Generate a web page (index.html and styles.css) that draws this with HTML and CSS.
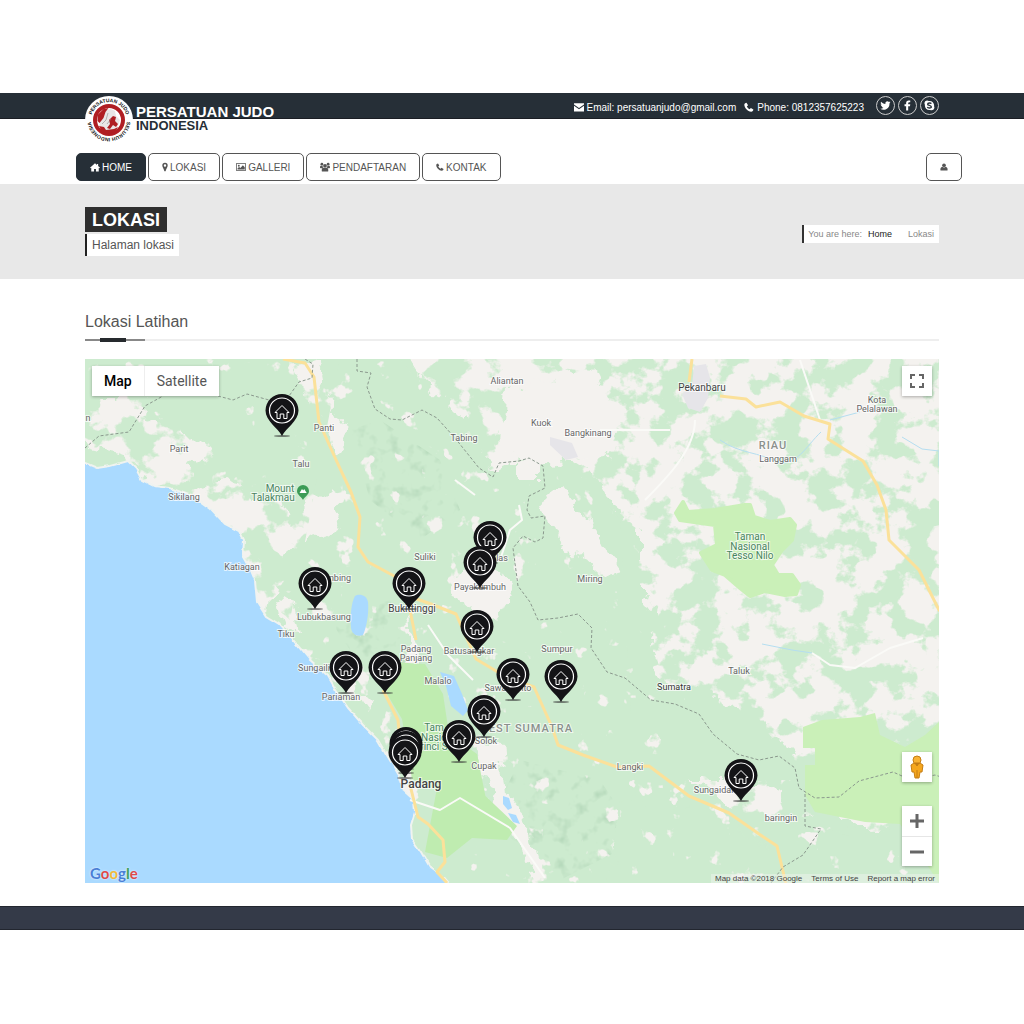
FILE: index.html
```html
<!DOCTYPE html>
<html lang="id">
<head>
  <meta charset="UTF-8">
  <meta name="viewport" content="width=device-width, initial-scale=1">
  <title>Persatuan Judo Indonesia</title>
  <link rel="stylesheet" href="styles.css">
</head>
<body>
  <header>
    <div class="topbar">
      <div class="container topbar-inner">
        <a class="brand" href="index.html">
          <svg class="logo" viewBox="0 0 48 48" aria-hidden="true">
            <defs>
              <path id="arcTop" d="M24 42A18 18 0 1 1 24.100 42"/>
              <path id="arcBottom" d="M24 6A18 18 0 1 1 23.900 6"/>
            </defs>
            <circle cx="24" cy="24" r="24" fill="#fff"/>
            <text class="logo-text"><textPath href="#arcTop" startOffset="50%">PERSATUAN JUDO</textPath></text>
            <text class="logo-text"><textPath href="#arcBottom" startOffset="50%">SELURUH INDONESIA</textPath></text>
            <circle cx="24" cy="24" r="14" fill="#fff" stroke="#b01e23" stroke-width="4"/>
            <path d="M14 31l2-9c1-6 5-9 10-9l4 2 1 5 4 4-2 6-5 4-8 1z" fill="#e9e6e6"/>
            <path d="M12.500 19l6-6 5-1-3 4-2 6-4 5-2-2z" fill="#b01e23"/>
            <path d="M28 20l3 1-1 4 3 3-2 3-3-2-3 4-3-1 3-4-1-4z" fill="#b01e23"/>
            <path d="M14 30l5 1 2 3 8-1 4-2-3 5-7 2-6-2z" fill="#b01e23"/>
            <path d="M17 28l4-4 2-7M22 28l4-5" fill="none" stroke="#8c8c8c" stroke-width="0.600"/>
          </svg>
          <span class="brand-name">PERSATUAN JUDO <small>INDONESIA</small></span>
        </a>
        <div class="contact">
          <span>
            <svg class="icon" viewBox="0 0 16 16"><path d="M0 2h16v2L8 9.500 0 4zM0 6l8 5.500L16 6v9H0z"/></svg>
            Email: persatuanjudo@gmail.com
          </span>
          <span>
            <svg class="icon" viewBox="0 0 16 16"><path d="M4 1l2.500 4-2 2c1 2 2.500 3.500 4.500 4.500l2-2 4 2.500c0 2-1.500 3.500-3.500 3.500C6 15.500.5 9 .5 4.500.5 2.500 2 1 4 1z"/></svg>
            Phone: 0812357625223
          </span>
        </div>
        <div class="social">
          <a href="#" aria-label="Twitter"><svg viewBox="0 0 24 24"><path d="M23 5c-.8.400-1.700.600-2.600.7.900-.6 1.600-1.400 2-2.500-.9.500-1.900.9-2.900 1.100a4.600 4.600 0 0 0-7.800 4.200C7.900 8.300 4.500 6.500 2.200 3.700a4.600 4.600 0 0 0 1.400 6.100c-.7 0-1.400-.2-2-.6 0 2.300 1.500 4.200 3.600 4.600-.7.200-1.400.2-2 .1.600 1.800 2.200 3.100 4.200 3.200A9.200 9.200 0 0 1 .6 19 13 13 0 0 0 20.700 7.400C21.600 6.700 22.400 5.900 23 5z"/></svg></a>
          <a href="#" aria-label="Facebook"><svg viewBox="0 0 24 24"><path d="M18 1v4h-2.500c-1.300 0-2 .7-2 2v2.500H18l-.6 4h-3.900V23H9V13.500H5.500v-4H9v-3C9 3 11 1 14.500 1z"/></svg></a>
          <a href="#" aria-label="Skype"><svg viewBox="0 0 24 24"><path d="M7 1c1.500 0 2.500.4 3.500 1.100C17 1 23 6 22 13.500c2.500 5-2 10.500-8.500 8.400C6.500 23 1 17.500 2 10.500-.5 6 2 1 7 1z"/><path class="skype-s" d="M16 8c-1-2-8-2.500-8 1 0 3.500 8 2 8 6 0 3.500-8 3-8.500 0"/></svg></a>
        </div>
      </div>
    </div>

    <div class="container">
      <nav class="menu">
        <a class="btn active" href="index.html">
          <svg class="icon" viewBox="0 0 16 16"><path d="M8 2l3 2.600V3h2v3.300L16 9l-1 1-1-.9V15H9.500v-4h-3v4H2V9.100L1 10 0 9z"/></svg>HOME
        </a>
        <a class="btn" href="lokasi.html">
          <svg class="icon narrow" viewBox="0 0 10 16"><path fill-rule="evenodd" d="M5 1a4.500 4.500 0 0 1 4.500 4.500C9.500 8 7 11 6 15H4C3 11 .5 8 .5 5.500A4.500 4.500 0 0 1 5 1zm0 2.500a2 2 0 1 0 0 4 2 2 0 0 0 0-4z"/></svg>LOKASI
        </a>
        <a class="btn" href="galleri.html">
          <svg class="icon" viewBox="0 0 16 16"><path fill-rule="evenodd" d="M0 2h16v12H0zm1.200 1.200v9.600h13.600V3.200z"/><circle cx="4.500" cy="6" r="1.500"/><path d="M2.500 12v-2L5 8l2 1.500L11 5l3 3.500V12z"/></svg>GALLERI
        </a>
        <a class="btn" href="pendaftaran.html">
          <svg class="icon" viewBox="0 0 16 16"><circle cx="3" cy="3.500" r="2.200"/><circle cx="13" cy="3.500" r="2.200"/><circle cx="8" cy="6" r="3"/><path d="M0 9c0-2 .5-3 1.500-3h3c-.5 1.500 0 3 .5 3.500L3.500 10H1zM16 9c0-2-.5-3-1.500-3h-3c.5 1.500 0 3-.5 3.500l1.500.5H15zM3 15c-1-3 .5-6 2.500-6 1.500 1 3.500 1 5 0 2 0 3.500 3 2.500 6z"/></svg>PENDAFTARAN
        </a>
        <a class="btn" href="kontak.html">
          <svg class="icon small" viewBox="0 0 16 16"><path d="M4 1l2.500 4-2 2c1 2 2.500 3.500 4.500 4.500l2-2 4 2.500c0 2-1.500 3.500-3.500 3.500C6 15.500.5 9 .5 4.500.5 2.500 2 1 4 1z"/></svg>KONTAK
        </a>
        <a class="btn login" href="login.html" aria-label="Login">
          <svg class="icon small" viewBox="0 0 16 16"><circle cx="8" cy="4.500" r="3.700"/><path d="M1 15C0 11 2 8 4.500 7.500c2 2 5 2 7 0C14 8 16 11 15 15z"/></svg>
        </a>
      </nav>
    </div>
  </header>

  <section class="page-title">
    <div class="container page-title-inner">
      <div>
        <h1>LOKASI</h1>
        <p>Halaman lokasi</p>
      </div>
      <div class="breadcrumb">
        <span>You are here:</span>
        <a href="index.html">Home</a>
        <span class="current">Lokasi</span>
      </div>
    </div>
  </section>

  <main class="container">
    <h2>Lokasi Latihan</h2>

    <div class="map">
      <svg class="map-canvas" viewBox="85 359 854 524" role="img" aria-label="Peta lokasi latihan">
        <defs>
          <filter id="rough" x="-5%" y="-5%" width="110%" height="110%">
            <feTurbulence type="fractalNoise" baseFrequency="0.05" numOctaves="4" seed="4"/>
            <feDisplacementMap in="SourceGraphic" scale="26" xChannelSelector="R" yChannelSelector="G"/>
          </filter>
          <filter id="coast" x="-5%" y="-5%" width="110%" height="110%">
            <feTurbulence type="fractalNoise" baseFrequency="0.08" numOctaves="3" seed="2" result="n"/>
            <feDisplacementMap in="SourceGraphic" in2="n" scale="4" xChannelSelector="R" yChannelSelector="G"/>
          </filter>
          <!-- forest patches over the open land -->
          <filter id="patches" x="0" y="0" width="100%" height="100%">
            <feTurbulence type="fractalNoise" baseFrequency="0.032 0.036" numOctaves="5" seed="11"/>
            <feColorMatrix values="0 0 0 0 0  0 0 0 0 0  0 0 0 0 0  0 0 0 14 -6.9" result="n"/>
            <feComposite in="SourceGraphic" in2="n" operator="in"/>
          </filter>
          <filter id="specks" x="0" y="0" width="100%" height="100%">
            <feTurbulence type="fractalNoise" baseFrequency="0.045" numOctaves="4" seed="23"/>
            <feColorMatrix values="0 0 0 0 0  0 0 0 0 0  0 0 0 0 0  0 0 0 16 -11.2" result="n"/>
            <feComposite in="SourceGraphic" in2="n" operator="in"/>
          </filter>
          <filter id="relief" x="0" y="0" width="100%" height="100%">
            <feTurbulence type="fractalNoise" baseFrequency="0.07" numOctaves="3" seed="7"/>
            <feColorMatrix values="0 0 0 0 0  0 0 0 0 0  0 0 0 0 0  0 0 0 3 -1.6" result="n"/>
            <feComposite in="SourceGraphic" in2="n" operator="in"/>
          </filter>
          <g id="pin">
            <ellipse cx="0" cy="0" rx="8" ry="1" fill="#333" opacity="0.6"/>
            <path d="M0 0C-4-8-16.500-15-16.500-25.500a16.500 16.500 0 0 1 33 0C16.500-15 4-8 0 0z" fill="#141417"/>
            <circle cx="0" cy="-25.500" r="12.500" fill="none" stroke="#fff" stroke-width="1.200"/>
            <path d="M-7-23.500L0-30.500 7-23.500 5-23.500V-17.500H1.800V-22H-1.800V-17.500H-5V-23.500z" fill="none" stroke="#fff" stroke-width="1" stroke-linejoin="round"/>
          </g>
        </defs>

        <rect x="85" y="359" width="854" height="524" fill="#cdebcf"/>
        <g fill="#b6d9bb">
          <path filter="url(#relief)" d="M350 430l30-10 60 40 20 50-40 30-50-40zM330 620l60-20 20 60-40 20zM520 760l80 20 40 60-80 40-70-60z"/>
        </g>
        <rect x="85" y="359" width="600" height="524" fill="#f4f2ef" filter="url(#specks)"/>

        <!-- open land -->
        <g fill="#f4f2ef" filter="url(#rough)">
          <path d="M395 345L425 385 445 400 470 425 485 440 492 470 515 465 515 480 540 480 545 465 565 460 600 482 615 510 640 530 640 590 660 620 650 650 665 690 700 690 760 720 800 760 810 800 860 830 960 830V345z"/>
          <path d="M85 400l30 0 20-30 15 15-5 35 40 10 25 25-25 15 5 20 40-10 25 20 20-5 15 30 40-40 15 10-10 30-40 25-20 20-5 45-25 10-15-50-20-40-60-40-20-40-50-10z"/>
          <path d="M290 365l30-5 5 25 25 60-15 10-15-45-15-20z"/>
          <path d="M545 500l15-10 40 50 20 30-20 5-40-35z"/>
          <path d="M450 578l50-10 15 25-20 25-35-15zM475 740l25 5 5 50 25 30 15 50-8 2-35-60-25-50zM280 600l15 5 5 30-15-10zM395 730l15 10 5 60-10 5zM690 780l70 0 50 40-20 10-60-25zM345 655l10 30 20 20-5 10-25-30zM410 610l8 50 20 50-5 4-25-50z"/>
        </g>
        <path fill="#cdebcf" filter="url(#patches)" d="M400 359H939V883H640L620 520 560 450 490 470z"/>
        <path fill="#cdebcf" filter="url(#patches)" d="M85 359H340L290 620 140 490 85 460z"/>
        <path fill="#f4f2ef" filter="url(#rough)" d="M505 385l90-15 30 60-20 25-75 10-30-20z"/>
        <path fill="#cdebcf" filter="url(#rough)" d="M620 800l90 10 60 40 60-20 120 10v60H610z"/>
        <path fill="#f4f2ef" filter="url(#specks)" d="M620 780H939V883H620z"/>
        <path fill="#e6e5e9" d="M694 366l12-2 4 14-2 20-8 14-12-4-6-14 10-8zM550 437l22 6 6 14-12 3-16-15z"/>

        <!-- national parks -->
        <path fill="#caf0b8" stroke="#caf0b8" stroke-width="4" stroke-linejoin="round" d="M676 513L683 502 688 512 715 510 745 505 750 505 754 517 770 522 790 519 795 525 792 540 782 550 772 565 778 575 792 575 799 585 796 594 785 595 765 591 750 596 740 588 725 575 712 570 701 553 717 545 715 525 680 520z"/>
        <path fill="#caf0b8" d="M803 727L822 720 860 717 875 713 880 735 905 747 925 735 939 722V883L900 824 865 822 815 812 805 795 805 765 815 765 815 748 803 748z"/>
        <path fill="#bfecb0" d="M390 662l35 2 18 30 6 40 28 20 10 50-40-10-35-15-10-60-15-25zM437 788l40 0 40 38-10 14-35-2-25 20-22-6z"/>

        <path class="water" stroke="#f0f3f0" stroke-width="2" filter="url(#coast)" d="M70 461L85 463l12 5 13-2 18-5 8 8 6 11 12 6 16 2 24 9 17 12 14 15 14 7 5 10-1 15 7 12 5 12 2 22 9 14 13 8 14 16 16 19 19 17 8 14 12 18 15 17 15 15 10 17 12 20 4 14 10 9 1 12-4 13 1 14 9 13 9 15 12 9 12 14H70z"/>
        <g class="water">
          <path d="M355 596c4-3 12-1 13 6 1 10-1 24-5 33-5 2-11 0-12-7-1-10 0-25 4-32z"/>
          <path d="M440 672l14 4 8 18 6 16-5 6-12-10-5-20zM503 796l6 2 3 10-4 2-5-6zM508 813l8 2 4 9-7-2z"/>
        </g>
        <path class="river" d="M720 440c20 14 40 12 56 22 20 6 30-16 45-30M830 420l30-8M902 437l20 12 17 2v15M762 644l30 6 20 3"/>

        <!-- minor and main roads -->
        <path class="road-minor" d="M800 360l20 60M695 420c0 30-30 60-50 80M600 430h70M428 625l20 30 25 25M500 560l10-30 12-10-3-15M410 800l30 10 20-12 50 30 35 50M455 480l20 15M812 653l18 12 25 3 35-20 33-10"/>
        <path class="road" d="M283 359l22 4 9 14 5 45 18 40 14 30 9 25-2 30 10 15 28 15 15 20 20 7 25 10 20 45 30 18 28 10 18 40 6 18 25 10 34 12 32-1 40 30 40 17 30 21 18 12 13 55M692 359l-3 23M720 396l26 3 10 8 24-5 24 14 26 8-2 15 35 22 14 24 9 25 3 30 30 30 20 40 12 10M410 610l6 30M383 690l15 30 4 40M410 785l8 32 10 7 15 16 2 22-8 10 10 11"/>

        <!-- province borders -->
        <path class="border" d="M85 448l14-12 30-4 16-26 18-10M218 396l15 4 14-6 22 6 20-4 10-14 13-4 1-14-13-8M357 359l0 12 14 2-4 14 8 22 15 10 12 1 20-10 15 8 18 20 24 30 14 9 6-14 20-2 10-3 14 8 2 22-16 8-2 14 4 8 14-2-2 22-8 4-12-6-10 12 5 38 12 16 8 18 20-2 20-4 14 14-1 20 16 24 18 6 26 22 24 4 24 10 14 20 24 20 22 6 20-4 16 12 4 20 16 10 24-1 20-16 34-9 18 8 24-5 30 10 20-4M805 794l0 32 16 3-18 26-20 12-12 16"/>

        <g class="label">
          <text x="507" y="384">Aliantan</text>
          <text x="541" y="426">Kuok</text>
          <text x="588" y="436">Bangkinang</text>
          <text x="464" y="441">Tabing</text>
          <text x="324" y="431">Panti</text>
          <text x="179" y="452">Parit</text>
          <text x="301" y="467">Talu</text>
          <text x="184" y="500">Sikilang</text>
          <text x="242" y="570">Katiagan</text>
          <text x="88" y="421">n</text>
          <text x="425" y="560">Suliki</text>
          <text x="502" y="561">las</text>
          <text x="480" y="590">Payakumbuh</text>
          <text x="590" y="582">Miring</text>
          <text x="340" y="581">nbing</text>
          <text x="324" y="620">Lubukbasung</text>
          <text x="286" y="637">Tiku</text>
          <text x="314" y="671">Sungaili</text>
          <text x="341" y="700">Pariaman</text>
          <text x="416" y="652">Padang</text>
          <text x="416" y="661">Panjang</text>
          <text x="469" y="654">Batusangkar</text>
          <text x="438" y="684">Malalo</text>
          <text x="508" y="691">Sawahlunto</text>
          <text x="557" y="652">Sumpur</text>
          <text x="486" y="744">Solok</text>
          <text x="484" y="769">Cupak</text>
          <text x="630" y="770">Langki</text>
          <text x="739" y="674">Taluk</text>
          <text x="714" y="793">Sungaidar</text>
          <text x="781" y="821">baringin</text>
          <text x="778" y="462">Langgam</text>
          <text x="877" y="403">Kota</text>
          <text x="877" y="412">Pelalawan</text>
          <text class="dark" x="674" y="690">Sumatra</text>
        </g>
        <g class="label town">
          <text x="412" y="612">Bukittinggi</text>
          <text x="702" y="391">Pekanbaru</text>
          <text class="city" x="421" y="788">Padang</text>
        </g>
        <g class="label park">
          <text x="280" y="492">Mount</text>
          <text x="273" y="501">Talakmau</text>
          <text x="750" y="540">Taman</text>
          <text x="750" y="550">Nasional</text>
          <text x="750" y="559">Tesso Nilo</text>
          <text x="434" y="731">Tam</text>
          <text x="434" y="741">Nasio</text>
          <text x="434" y="750">rinci S</text>
        </g>
        <g class="label region">
          <text x="773" y="449">RIAU</text>
          <text x="531" y="732">EST SUMATRA</text>
        </g>
        <path fill="#3c9b56" d="M303 500c-1-3-6-5-6-9a6 6 0 0 1 12 0c0 4-5 6-6 9z"/>
        <path fill="#fff" d="M299.500 493l2.500-4 1.200 1.500 1-1.500 2.500 4z"/>

        <use href="#pin" x="282" y="436"/>
        <use href="#pin" x="490" y="563"/>
        <use href="#pin" x="480" y="588"/>
        <use href="#pin" x="315" y="609"/>
        <use href="#pin" x="409" y="609"/>
        <use href="#pin" x="477" y="652"/>
        <use href="#pin" x="346" y="693"/>
        <use href="#pin" x="385" y="693"/>
        <use href="#pin" x="513" y="700"/>
        <use href="#pin" x="561" y="702"/>
        <use href="#pin" x="484" y="737"/>
        <use href="#pin" x="459" y="762"/>
        <use href="#pin" x="406" y="769"/>
        <use href="#pin" x="406" y="773"/>
        <use href="#pin" x="405" y="778"/>
        <use href="#pin" x="741" y="801"/>
      </svg>

      <div class="map-types">
        <button type="button" class="selected">Map</button>
        <button type="button">Satellite</button>
      </div>
      <button type="button" class="map-btn fullscreen" aria-label="Fullscreen">
        <svg viewBox="0 0 14 14"><path d="M1 5V1h4M9 1h4v4M13 9v4H9M5 13H1V9"/></svg>
      </button>
      <div class="map-controls">
        <button type="button" class="map-btn" aria-label="Street View">
          <svg class="pegman" viewBox="0 0 14 24"><path d="M4 8h6l3 2-1 7h-2l-1 6H5l-1-6H2l-1-7z" fill="#f5a61d" stroke="#c47d14"/><circle cx="7" cy="5" r="4" fill="#f9b233" stroke="#c47d14"/><path d="M5 8h4l-2 3zM7 15v8" fill="#c47d14" stroke="#c47d14"/></svg>
        </button>
        <div class="zoom">
          <button type="button" class="map-btn" aria-label="Zoom in"><svg viewBox="0 0 14 14"><path class="thick" d="M7 0v14M0 7h14"/></svg></button>
          <button type="button" class="map-btn" aria-label="Zoom out"><svg viewBox="0 0 14 14"><path class="thick" d="M0 7h14"/></svg></button>
        </div>
      </div>
      <a class="google" href="#"><span class="blue">G</span><span class="red">o</span><span class="yellow">o</span><span class="blue">g</span><span class="green">l</span><span class="red">e</span></a>
      <div class="map-legal">
        <span>Map data ©2018 Google</span>
        <a href="#">Terms of Use</a>
        <a href="#">Report a map error</a>
      </div>
    </div>
  </main>

  <footer></footer>
</body>
</html>
```
FILE: styles.css
```css
/* Reset & basic styling */
* { box-sizing: border-box; }
body {
  margin: 0;
  padding: 93px 0;
  font-family: "Liberation Sans", Arial, sans-serif;
  font-size: 10px;
  color: #555;
  background: #fff;
}
a {
  color: inherit;
  text-decoration: none;
}
h1, h2, p { margin: 0; }
.container {
  max-width: 854px;
  margin: 0 auto;
}
.icon {
  width: 10px;
  height: 10px;
  fill: currentColor;
  flex: none;
}
.icon.narrow { width: 6px; }
.icon.small {
  width: 8px;
  height: 8px;
}

/* Top bar */
.topbar {
  background: #262f37;
  border-bottom: 1px solid #1b1e24;
  color: #fff;
}
.topbar-inner {
  position: relative;
  display: flex;
  justify-content: flex-end;
  align-items: center;
  gap: 12px;
  height: 25px;
}
.brand {
  position: absolute;
  left: 0;
  top: 3px;
  display: flex;
  gap: 3px;
}
.logo {
  width: 48px;
  height: 48px;
}
.logo-text {
  font-size: 5px;
  font-weight: bold;
  text-anchor: middle;
  fill: #111;
}
.brand-name {
  padding-top: 9px;
  font-size: 15px;
  font-weight: bold;
  line-height: 14px;
}
.brand-name small {
  display: block;
  font-size: 13px;
  line-height: 13px;
  color: #262f37;
}
.contact {
  display: flex;
  gap: 8px;
  padding-top: 3px;
}
.contact span {
  display: flex;
  align-items: center;
  gap: 3px;
}
.social {
  display: flex;
  gap: 3px;
}
.social a {
  display: flex;
  align-items: center;
  justify-content: center;
  width: 19px;
  height: 19px;
  border: 1px solid #ccc;
  border-radius: 50%;
}
.social svg {
  width: 11px;
  height: 11px;
  fill: #fff;
}
.social .skype-s {
  fill: none;
  stroke: #262f37;
  stroke-width: 3px;
}

/* Menu */
.menu {
  display: flex;
  gap: 2px;
  margin: 0 -23px 0 -9px;
  padding: 34px 0 3px;
}
.btn {
  display: flex;
  align-items: center;
  gap: 2px;
  height: 28px;
  padding: 0 13px;
  border: 1px solid #555;
  border-radius: 5px;
}
.btn.active {
  background: #262f37;
  border-color: #262f37;
  color: #fff;
}
.btn.login { margin-left: auto; }

/* Page title */
.page-title {
  background: #e8e8e8;
  padding: 23px 0;
}
.page-title-inner {
  display: flex;
  justify-content: space-between;
  align-items: center;
}
.page-title h1 {
  display: table;
  padding: 1px 7px 0;
  background: #2e2e2e;
  color: #fff;
  font-size: 18px;
  line-height: 24px;
}
.page-title p {
  display: table;
  margin-top: 2px;
  padding: 0 5px;
  border-left: 2px solid #222;
  background: #fff;
  font-size: 12px;
  line-height: 22px;
}
.breadcrumb {
  display: flex;
  gap: 6px;
  padding: 0 5px 0 4px;
  margin-top: 5px;
  border-left: 2px solid #333;
  background: #fff;
  color: #888;
  font-size: 9px;
  line-height: 18px;
}
.breadcrumb a { color: #222; }
.breadcrumb .current { margin-left: 10px; }

/* Section heading */
h2 {
  position: relative;
  margin: 33px 0 18px;
  padding-bottom: 7px;
  border-bottom: 2px solid #eee;
  font-size: 16px;
  font-weight: normal;
  line-height: 20px;
}
h2::before,
h2::after {
  content: "";
  position: absolute;
  bottom: -2px;
  left: 0;
  width: 60px;
  height: 2px;
  background: #888;
}
h2::after {
  left: 15px;
  bottom: -3px;
  width: 26px;
  height: 4px;
  background: #262a2e;
}

/* Map */
.map {
  position: relative;
  font-family: Roboto, sans-serif;
}
.map-canvas {
  display: block;
  width: 100%;
}
.water { fill: #aadaff; }
.river {
  fill: none;
  stroke: #b5def0;
  stroke-width: 1px;
}
.road {
  fill: none;
  stroke: #fbe19a;
  stroke-width: 3px;
  stroke-linejoin: round;
}
.road-minor {
  fill: none;
  stroke: #fafaf7;
  stroke-width: 2px;
  stroke-linejoin: round;
}
.border {
  fill: none;
  stroke: #8b998e;
  stroke-width: 1px;
  stroke-dasharray: 3 2;
  stroke-linejoin: round;
}
.label {
  font-size: 9px;
  text-anchor: middle;
  fill: #666;
  stroke: #fff;
  stroke-opacity: 0.7;
  stroke-width: 2px;
  paint-order: stroke;
}
.label .dark { fill: #333; }
.label.town {
  font-size: 10px;
  fill: #444;
}
.label .city {
  font-size: 12px;
  font-weight: 500;
}
.label.park {
  font-size: 10px;
  fill: #4a8560;
}
.label.region {
  font-size: 11px;
  font-weight: 500;
  letter-spacing: 1px;
  fill: #8a908c;
}

/* Map controls */
.map button {
  border: 0;
  background: #fff;
  font-family: inherit;
  color: #565656;
  cursor: pointer;
}
.map-types {
  position: absolute;
  top: 7px;
  left: 7px;
  display: flex;
  box-shadow: 0 1px 3px rgba(0,0,0,0.3);
}
.map-types button {
  height: 30px;
  padding: 0 12px;
  font-size: 14px;
}
.map-types button + button { border-left: 1px solid #eee; }
.map-types .selected {
  color: #000;
  font-weight: 500;
}
.map-btn {
  display: flex;
  align-items: center;
  justify-content: center;
  width: 30px;
  height: 30px;
  padding: 0;
  box-shadow: 0 1px 3px rgba(0,0,0,0.3);
}
.map-btn svg {
  width: 14px;
  height: 14px;
  fill: none;
  stroke: #666;
  stroke-width: 2px;
}
.map-btn .thick { stroke-width: 3px; }
.map-btn .pegman {
  height: 24px;
  stroke-width: 1px;
}
.fullscreen {
  position: absolute;
  top: 7px;
  right: 7px;
}
.map-controls {
  position: absolute;
  right: 7px;
  bottom: 17px;
  display: flex;
  flex-direction: column;
  gap: 24px;
}
.zoom {
  background: #fff;
  box-shadow: 0 1px 3px rgba(0,0,0,0.3);
}
.zoom .map-btn { box-shadow: none; }
.zoom .map-btn + .map-btn { border-top: 1px solid #e6e6e6; }
.google {
  position: absolute;
  left: 5px;
  bottom: 0;
  font-family: Lato, sans-serif;
  font-size: 15px;
  font-weight: bold;
  line-height: 20px;
  text-shadow: 0 0 2px #fff;
}
.blue { color: #4a7fd6; }
.red { color: #dc4a4a; }
.yellow { color: #f0b93a; }
.green { color: #3f9f5a; }
.map-legal {
  position: absolute;
  right: 0;
  bottom: 0;
  display: flex;
  gap: 9px;
  padding: 0 4px;
  background: rgba(245,245,245,0.4);
  color: #444;
  font-family: "Liberation Sans", Arial, sans-serif;
  font-size: 8px;
  line-height: 9px;
}

footer {
  height: 24px;
  margin-top: 23px;
  background: #343a48;
  border: solid #22262f;
  border-width: 1px 0;
}
```
